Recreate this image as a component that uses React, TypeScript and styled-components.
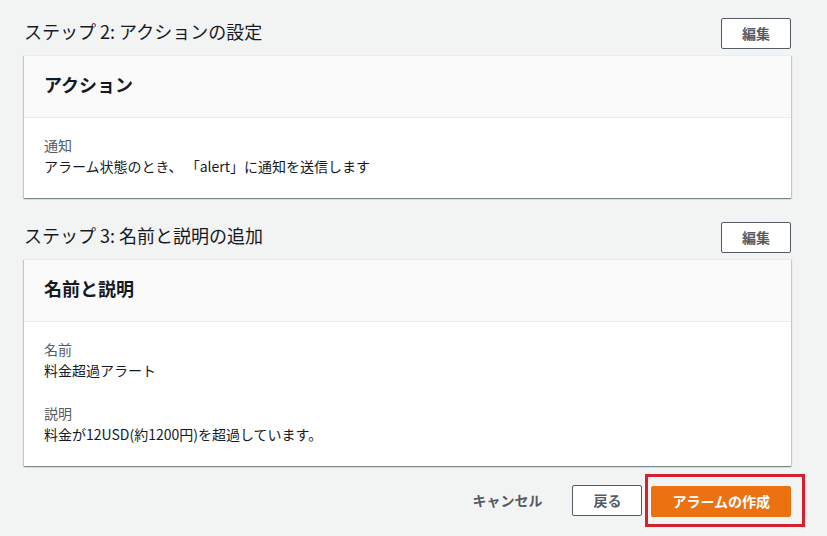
import React from "react";
import styled, { createGlobalStyle } from "styled-components";

const GlobalStyle = createGlobalStyle`
  html, body {
    margin: 0;
    padding: 0;
    background: #f2f3f3;
  }
  body {
    font-family: "Noto Sans CJK JP", "Noto Sans", "Liberation Sans", sans-serif;
    color: #16191f;
  }
  *, *::before, *::after { box-sizing: border-box; }
`;

const Page = styled.div`
  display: flex;
  flex-direction: column;
  padding: 18px 36px 0 24px;
`;

const Section = styled.section<{ $gap?: number }>`
  display: flex;
  flex-direction: column;
  margin-bottom: ${(p) => p.$gap ?? 0}px;
`;

const StepHeader = styled.div`
  display: flex;
  align-items: center;
  justify-content: space-between;
  margin-bottom: 6px;
`;

const StepTitle = styled.h2`
  margin: -5px 0 0;
  font-size: 18px;
  font-weight: 400;
  line-height: 24px;
  color: #16191f;
`;

const Button = styled.button<{ $variant?: "normal" | "primary" | "link" }>`
  display: block;
  height: 31px;
  font-family: inherit;
  font-size: 14px;
  font-weight: 700;
  line-height: 21px;
  padding: 4px 20px;
  border-radius: 2px;
  cursor: pointer;
  white-space: nowrap;
  border: 1px solid
    ${(p) =>
      p.$variant === "primary"
        ? "#ec7211"
        : p.$variant === "link"
        ? "transparent"
        : "#545b64"};
  background: ${(p) =>
    p.$variant === "primary" ? "#ec7211" : p.$variant === "link" ? "transparent" : "#ffffff"};
  color: ${(p) => (p.$variant === "primary" ? "#ffffff" : "#545b64")};
`;

const Card = styled.div`
  background: #ffffff;
  box-shadow: 0 1px 1px 0 rgba(0, 28, 36, 0.3), 1px 1px 1px 0 rgba(0, 28, 36, 0.15),
    -1px 1px 1px 0 rgba(0, 28, 36, 0.15);
  border-top: 1px solid #eaeded;
`;

const CardHeader = styled.div`
  background: #fafafa;
  border-bottom: 1px solid #eaeded;
  padding: 16px 20px 21px;
`;

const CardTitle = styled.h3`
  margin: 0;
  font-size: 18px;
  font-weight: 700;
  line-height: 24px;
  color: #16191f;
`;

const CardBody = styled.div`
  display: flex;
  flex-direction: column;
  gap: 22px;
  padding: 17px 20px 21px;
`;

const Field = styled.div`
  display: flex;
  flex-direction: column;
`;

const Label = styled.div`
  font-size: 14px;
  line-height: 21px;
  color: #545b64;
`;

const Value = styled.div`
  font-size: 14px;
  line-height: 21px;
  color: #16191f;
`;

const Footer = styled.div`
  display: flex;
  justify-content: flex-end;
  align-items: center;
  gap: 9px;
  margin-top: 8px;
  margin-right: -14px;
`;

const Highlight = styled.div`
  display: flex;
  border: 3px solid #d42030;
  padding: 9px 11px 7px 3px;
  margin-left: -6px;
`;

type Item = { label: string; value: string };

const StepCard: React.FC<{ step: string; title: string; items: Item[]; gap?: number }> = ({
  step,
  title,
  items,
  gap,
}) => (
  <Section $gap={gap}>
    <StepHeader>
      <StepTitle>{step}</StepTitle>
      <Button>編集</Button>
    </StepHeader>
    <Card>
      <CardHeader>
        <CardTitle>{title}</CardTitle>
      </CardHeader>
      <CardBody>
        {items.map((it) => (
          <Field key={it.label}>
            <Label>{it.label}</Label>
            <Value>{it.value}</Value>
          </Field>
        ))}
      </CardBody>
    </Card>
  </Section>
);

export default function App() {
  return (
    <>
      <GlobalStyle />
      <Page>
        <StepCard
          step="ステップ 2: アクションの設定"
          title="アクション"
          gap={24}
          items={[{ label: "通知", value: "アラーム状態のとき、 「alert」に通知を送信します" }]}
        />
        <StepCard
          step="ステップ 3: 名前と説明の追加"
          title="名前と説明"
          items={[
            { label: "名前", value: "料金超過アラート" },
            { label: "説明", value: "料金が12USD(約1200円)を超過しています。" },
          ]}
        />
        <Footer>
          <Button $variant="link">キャンセル</Button>
          <Button>戻る</Button>
          <Highlight>
            <Button $variant="primary">アラームの作成</Button>
          </Highlight>
        </Footer>
      </Page>
    </>
  );
}
